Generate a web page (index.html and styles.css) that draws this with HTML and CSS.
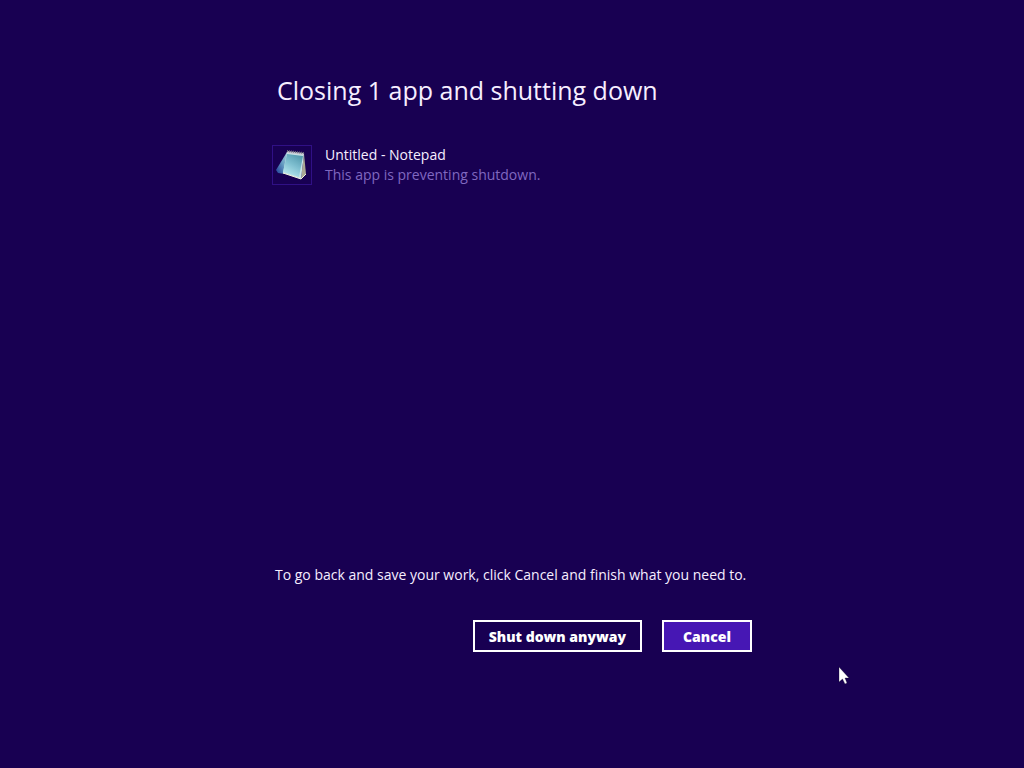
FILE: index.html
```html
<!DOCTYPE html>
<html lang="en">
<head>
<meta charset="utf-8">
<meta name="viewport" content="width=device-width, initial-scale=1">
<title>Shutting down</title>
<link rel="stylesheet" href="styles.css">
</head>
<body>
<main class="screen">
  <h1 class="title">Closing 1 app and shutting down</h1>
  <ul class="apps">
    <li class="app">
      <span class="app-icon">
        <svg viewBox="0 0 38 38" aria-hidden="true">
          <defs>
            <linearGradient id="page" x1="0.8" y1="0" x2="0.3" y2="1">
              <stop offset="0" stop-color="#4f96ab"/>
              <stop offset="0.5" stop-color="#7fbfd0"/>
              <stop offset="1" stop-color="#b9eaf0"/>
            </linearGradient>
            <linearGradient id="back" x1="1" y1="0" x2="0" y2="1">
              <stop offset="0" stop-color="#b5d3df"/>
              <stop offset="0.5" stop-color="#6ba3c4"/>
              <stop offset="1" stop-color="#1c3b98"/>
            </linearGradient>
          </defs>
          <path d="M14 6 L3 24 L5 27 L12 28 L17 12 Z" fill="url(#back)"/>
          <path d="M31 8 L33 28 L28 33 Z" fill="#aaa894"/>
          <path d="M14 6 L31 8 L28 33 L10 27 Z" fill="#c9e3e6"/>
          <path d="M14 8 L30 10 L26 31 L10 26 Z" fill="url(#page)"/>
          <path d="M14 6 L31 8" stroke="#c8c8d2" stroke-width="2"/>
          <path d="M14 5 L31 7" stroke="#6c6a7c" stroke-width="2" stroke-dasharray="1 1"/>
          <path d="M10 27 L28 33 L33 28" fill="none" stroke="#eef0dc"/>
        </svg>
      </span>
      <div class="app-text">
        <p class="app-name">Untitled - Notepad</p>
        <p class="app-status">This app is preventing shutdown.</p>
      </div>
    </li>
  </ul>
  <p class="hint">To go back and save your work, click Cancel and finish what you need to.</p>
  <div class="actions">
    <button class="btn" type="button">Shut down anyway</button>
    <button class="btn btn-primary" type="button">Cancel</button>
  </div>
</main>
<svg class="pointer" viewBox="0 0 12 19" aria-hidden="true">
  <path d="M1 1 V16 L4.500 13 L7 18 L9 17 L7 12 H11 Z" fill="#fff" stroke="#080020" stroke-width="0.3"/>
</svg>
</body>
</html>
```
FILE: styles.css
```css
* { box-sizing: border-box; }
body {
  margin: 0;
  background: #180052;
  color: #f6eeff;
  font-family: "Open Sans", "Noto Sans", sans-serif;
  font-size: 14px;
  line-height: 20px;
}
.screen {
  display: flex;
  flex-direction: column;
  width: 100%;
  max-width: 480px;
  min-height: 100vh;
  margin: 0 auto;
  padding: 72px 0 116px;
}
.title {
  margin: 0 0 37px;
  padding-left: 5px;
  font-size: 25px;
  font-weight: 400;
  line-height: 36px;
}
.apps { flex: 1; margin: 0; padding: 0; list-style: none; }
.app { display: flex; gap: 13px; }
.app-icon {
  flex: none;
  width: 40px;
  height: 40px;
  border: 1px solid #301085;
}
.app-icon svg { display: block; width: 100%; height: 100%; }
.app-name, .app-status { margin: 0; }
.app-status { color: #8068c0; }
.hint { margin: 0 0 35px; padding-left: 3px; }
.actions { display: flex; justify-content: flex-end; gap: 20px; }
.btn {
  min-width: 90px;
  height: 32px;
  padding: 1px 14px 0;
  border: 2px solid #fff;
  background: transparent;
  color: #fff;
  font: 800 14px/20px "Open Sans", "Noto Sans", sans-serif;
}
.btn-primary { background: #4617b4; }
.pointer {
  position: absolute;
  left: 838px;
  top: 666px;
  width: 12px;
  height: 19px;
}
```
